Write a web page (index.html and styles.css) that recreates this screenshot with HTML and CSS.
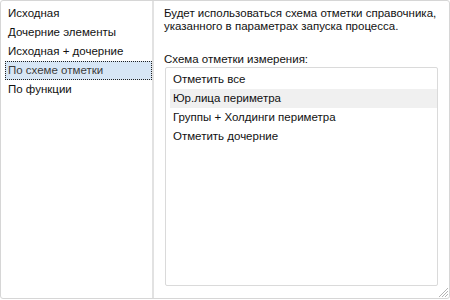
FILE: index.html
```html
<!DOCTYPE html>
<html lang="ru">
<head>
    <meta charset="UTF-8">
    <title>Схема отметки</title>
    <link rel="stylesheet" href="styles.css">
</head>
<body>
    <div class="window">
        <ul class="nav">
            <li>Исходная</li>
            <li>Дочерние элементы</li>
            <li>Исходная + дочерние</li>
            <li class="selected">По схеме отметки</li>
            <li>По функции</li>
        </ul>
        <div class="splitter"></div>
        <div class="panel">
            <p class="hint">Будет использоваться схема отметки справочника, указанного в параметрах запуска процесса.</p>
            <p class="caption">Схема отметки измерения:</p>
            <ul class="listbox">
                <li>Отметить все</li>
                <li class="hover">Юр.лица периметра</li>
                <li>Группы + Холдинги периметра</li>
                <li>Отметить дочерние</li>
            </ul>
        </div>
        <svg class="grip" width="12" height="12" viewBox="0 0 12 12">
            <path d="M11 2 L2 11 M11 5 L5 11 M11 8 L8 11" stroke="#b4b4b4" stroke-width="1"/>
        </svg>
    </div>
</body>
</html>
```

FILE: styles.css
```css
body {
    margin: 0;
    background: #fff;
    font-family: "Liberation Sans", Arial, sans-serif;
    font-size: 11.5px;
    color: #111;
}

.window {
    position: relative;
    box-sizing: border-box;
    width: 450px;
    height: 299px;
    border: 1px solid #d6d6d6;
    border-radius: 3px;
    display: flex;
}

.nav {
    list-style: none;
    margin: 0;
    padding: 3px 0 0 4px;
    width: 147px;
}

.nav li {
    height: 19px;
    line-height: 19px;
    padding-left: 3px;
    box-sizing: border-box;
    white-space: nowrap;
}

.nav li.selected {
    background: #d7e6f5;
    border: 1px dotted #222;
    padding-left: 2px;
    line-height: 17px;
    color: #3c3c3c;
}

.splitter {
    width: 2px;
    background: #e2e2e2;
}

.panel {
    flex: 1;
    display: flex;
    flex-direction: column;
    padding: 6px 11px 12px 10px;
}

.hint {
    margin: 0;
    line-height: 13px;
}

.caption {
    margin: 20px 0 0;
    line-height: 13px;
}

.listbox {
    list-style: none;
    flex: 1;
    margin: 1px 0 0 1px;
    padding: 2px 0 0 4px;
    border: 1px solid #dadada;
    border-radius: 2px;
}

.listbox li {
    height: 19px;
    line-height: 19px;
    padding-left: 3px;
}

.listbox li.hover {
    background: #f0f0f0;
}

.grip {
    position: absolute;
    right: 0;
    bottom: 0;
}
```
